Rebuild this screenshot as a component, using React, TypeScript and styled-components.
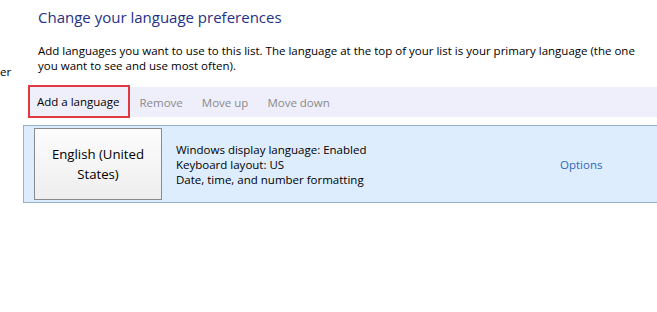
import React from "react";
import styled, { createGlobalStyle } from "styled-components";

const Global = createGlobalStyle`
  html, body { margin: 0; padding: 0; background: #ffffff; }
  body { font-family: "Open Sans", "Noto Sans", "DejaVu Sans", sans-serif; color: #000; }
  * { box-sizing: border-box; }
`;

const Page = styled.div`
  display: flex;
  width: 657px;
  height: 312px;
  overflow: hidden;
  background: #fff;
`;

const Sidebar = styled.div`
  width: 23px;
  flex: none;
  overflow: hidden;
  padding-top: 64px;
  font-size: 11.5px;
  line-height: 15px;
  color: #000;
  white-space: nowrap;
`;

const Main = styled.div`
  flex: 1;
  min-width: 0;
  display: flex;
  flex-direction: column;
`;

const Heading = styled.h1`
  margin: 6px 0 0 15px;
  font-size: 15px;
  line-height: 22px;
  font-weight: 400;
  color: #1e3287;
`;

const Description = styled.p`
  margin: 15px 0 0 15px;
  font-size: 11.5px;
  line-height: 15px;
  width: 600px;
  color: #000;
`;

const Toolbar = styled.div`
  margin: 14px 0 0 5px;
  height: 30px;
  background: #efeffb;
  display: flex;
  align-items: stretch;
`;

const ToolButton = styled.div<{ $disabled?: boolean; $highlight?: boolean }>`
  display: flex;
  align-items: center;
  padding: 0 ${(p) => (p.$highlight ? "7px" : "9.5px")};
  font-size: 11.5px;
  color: ${(p) => (p.$disabled ? "#8a8a8a" : "#000")};
  border: ${(p) => (p.$highlight ? "2px solid #e03a40" : "none")};
  margin: ${(p) => (p.$highlight ? "-2px 0 -1px 0" : "0")};
  width: ${(p) => (p.$highlight ? "102px" : "auto")};
`;

const ListItem = styled.div`
  margin-top: 8px;
  height: 78px;
  border: 1px solid #93b0cd;
  border-right: none;
  background: #ddedfd;
  display: flex;
  align-items: center;
  padding: 2px 0 2px 10px;
`;

const LangButton = styled.div`
  width: 128px;
  height: 72px;
  flex: none;
  border: 1px solid #8a8a8a;
  background: linear-gradient(#fcfcfc, #efeeee);
  display: flex;
  align-items: center;
  justify-content: center;
  text-align: center;
  font-size: 13.2px;
  line-height: 20px;
  color: #000;
  padding: 0 12px;
`;

const Details = styled.div`
  width: 384px;
  margin-left: 14px;
  flex: none;
  font-size: 11.5px;
  line-height: 15px;
  color: #000;
`;

const OptionsLink = styled.a`
  font-size: 11.5px;
  color: #2f68bb;
  text-decoration: none;
  cursor: pointer;
`;

export default function App() {
  return (
    <>
      <Global />
      <Page>
        <Sidebar>er</Sidebar>
        <Main>
          <Heading>Change your language preferences</Heading>
          <Description>
            Add languages you want to use to this list. The language at the top of your list is your primary language (the one
            you want to see and use most often).
          </Description>
          <Toolbar>
            <ToolButton $highlight>Add a language</ToolButton>
            <ToolButton $disabled>Remove</ToolButton>
            <ToolButton $disabled>Move up</ToolButton>
            <ToolButton $disabled>Move down</ToolButton>
          </Toolbar>
          <ListItem>
            <LangButton>English (United States)</LangButton>
            <Details>
              <div>Windows display language: Enabled</div>
              <div>Keyboard layout: US</div>
              <div>Date, time, and number formatting</div>
            </Details>
            <OptionsLink>Options</OptionsLink>
          </ListItem>
        </Main>
      </Page>
    </>
  );
}
